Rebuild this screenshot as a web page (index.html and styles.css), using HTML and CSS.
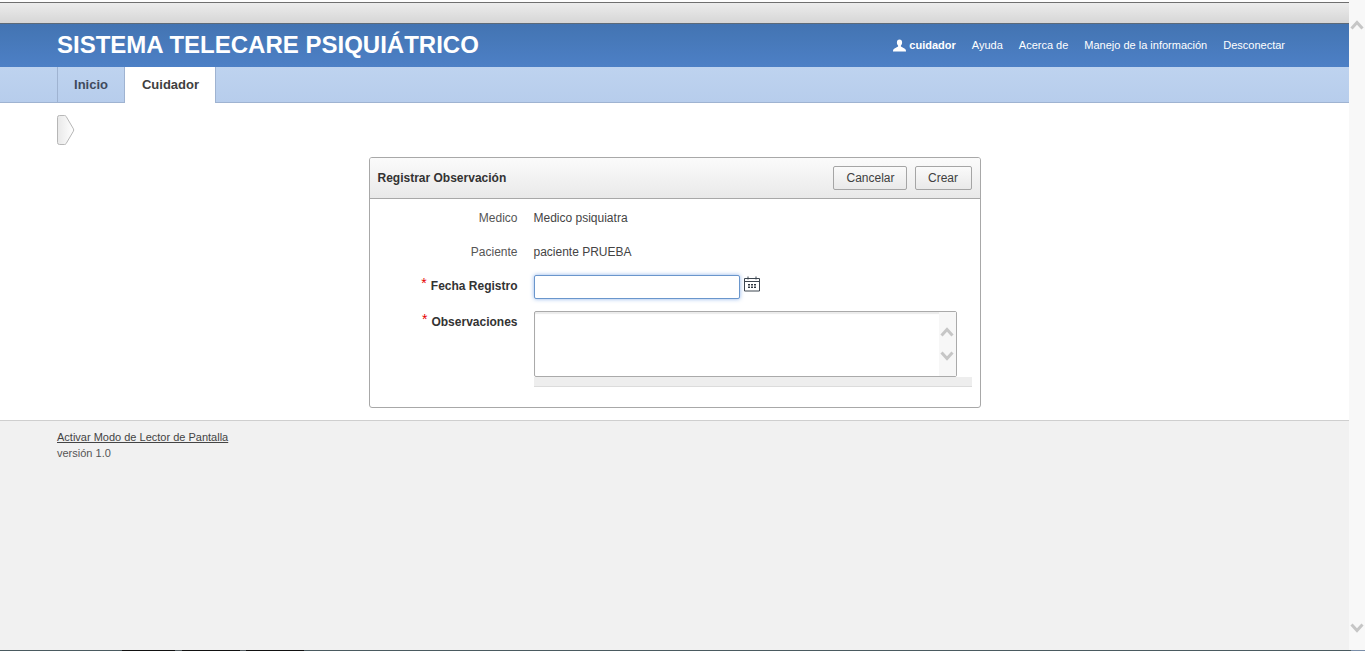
FILE: index.html
```html
<!DOCTYPE html>
<html lang="es">
<head>
<meta charset="utf-8">
<title>Sistema Telecare Psiquiátrico</title>
<link rel="stylesheet" href="styles.css">
</head>
<body>
<div class="top-row">
  <div class="page">
    <div class="top-edge"></div>
    <div class="browser-band"></div>
    <header class="header">
      <div class="brand">SISTEMA TELECARE PSIQUIÁTRICO</div>
      <nav class="user-nav">
        <span class="user"><svg class="user-icon" viewBox="0 0 14 13" aria-hidden="true"><path d="M7 0C5.2 0 4.2 1.3 4.2 3.2c0 1.4.5 2.7 1.3 3.4v1.1C4.600 8.600 1.600 9.400.6 10.600-.1 11.400 0 13 0 13h14s.1-1.600-.6-2.400C12.400 9.400 9.400 8.600 8.500 7.700V6.600c.8-.7 1.300-2 1.300-3.400C9.800 1.300 8.800 0 7 0z"/></svg>cuidador</span>
        <a>Ayuda</a>
        <a>Acerca de</a>
        <a>Manejo de la información</a>
        <a>Desconectar</a>
      </nav>
    </header>
    <nav class="tabs">
      <a class="tab">Inicio</a>
      <a class="tab tab-active">Cuidador</a>
    </nav>
    <main class="main">
      <div class="side-toggle">
        <svg class="toggle-icon" width="18" height="30" viewBox="0 0 18 31" preserveAspectRatio="none" aria-hidden="true">
          <defs><linearGradient id="tg" x1="0" x2="1" y1="0" y2="0"><stop offset="0" stop-color="#e8e8e8"/><stop offset="1" stop-color="#ffffff"/></linearGradient></defs>
          <path d="M2.500.5h5a2 2 0 0 1 1.600.9l7.300 12.900a2.500 2.500 0 0 1 0 2.400L9.100 29.600a2 2 0 0 1-1.600.9h-5a2 2 0 0 1-2-2v-26a2 2 0 0 1 2-2z" fill="url(#tg)" stroke="#b5b5b5"/>
        </svg>
      </div>
      <section class="card">
        <div class="card-head">
          <h2 class="card-title">Registrar Observación</h2>
          <div class="card-actions">
            <button class="btn btn-cancel" type="button">Cancelar</button>
            <button class="btn btn-create" type="button">Crear</button>
          </div>
        </div>
        <div class="form">
          <div class="row row-text">
            <div class="label">Medico</div>
            <div class="value">Medico psiquiatra</div>
          </div>
          <div class="row row-text">
            <div class="label">Paciente</div>
            <div class="value">paciente PRUEBA</div>
          </div>
          <div class="row row-date">
            <div class="label label-req label-date"><span class="req">*</span>Fecha Registro</div>
            <div class="field">
              <input class="date-input" type="text" aria-label="Fecha Registro">
              <svg class="cal-icon" width="16" height="16" viewBox="0 0 16 16" aria-hidden="true">
                <path d="M.5 2.500h15v12.500H.5z" fill="#fff" stroke="#3d4650"/>
                <path d="M1 5.500h14" stroke="#3d4650"/>
                <path d="M4 .5v3M12 .5v3" stroke="#3d4650"/>
                <path d="M4 8h2v1.500H4zM7 8h2v1.500H7zM10 8h2v1.500h-2zM4 10.500h2V12H4zM7 10.500h2V12H7zM10 10.500h2V12h-2z" fill="#2f3740"/>
              </svg>
            </div>
          </div>
          <div class="row row-area">
            <div class="label label-req label-area"><span class="req">*</span>Observaciones</div>
            <div class="area-wrap">
              <div class="area">
                <div class="area-input"></div>
                <div class="area-scroll">
                  <svg class="chev" width="14" height="10" viewBox="0 0 14 10" aria-hidden="true"><path d="M1.500 8.500 7 2.500l5.500 6" fill="none" stroke="#c6c6c6" stroke-width="3"/></svg>
                  <svg class="chev" width="14" height="10" viewBox="0 0 14 10" aria-hidden="true"><path d="M1.500 1.500 7 7.500l5.500-6" fill="none" stroke="#c6c6c6" stroke-width="3"/></svg>
                </div>
              </div>
              <div class="area-bar"></div>
            </div>
          </div>
        </div>
      </section>
    </main>
    <footer class="footer">
      <a class="footer-link">Activar Modo de Lector de Pantalla</a>
      <div class="version">versión 1.0</div>
    </footer>
  </div>
  <aside class="scrollbar">
    <svg class="chev" width="14" height="10" viewBox="0 0 14 10" aria-hidden="true"><path d="M1.500 8.500 7 2.500l5.500 6" fill="none" stroke="#c6c6c6" stroke-width="3"/></svg>
    <svg class="chev" width="14" height="10" viewBox="0 0 14 10" aria-hidden="true"><path d="M1.500 1.500 7 7.500l5.500-6" fill="none" stroke="#c6c6c6" stroke-width="3"/></svg>
  </aside>
</div>
<div class="bottom-edge"></div>
</body>
</html>
```
FILE: styles.css
```css
* { box-sizing: border-box; }
html, body { margin: 0; height: 651px; overflow: hidden; }
body {
  display: flex;
  flex-direction: column;
  font-family: "Liberation Sans", Arial, sans-serif;
  font-size: 12px;
  color: #404040;
  background: #fff;
}
.top-edge {
  height: 3px;
  background: #fdfdfd;
  border-bottom: 1px solid #6f6f6f;
  flex: none;
}
.top-row { flex: 1; display: flex; min-height: 0; }
.page { flex: 1; display: flex; flex-direction: column; min-width: 0; }
.browser-band {
  height: 21px;
  flex: none;
  background: linear-gradient(#ececec, #d6d6d6);
  border-bottom: 1px solid #5d6a78;
}
.header {
  height: 43px;
  flex: none;
  display: flex;
  align-items: center;
  justify-content: space-between;
  padding: 0 64px 1px 57px;
  background: linear-gradient(#4374b2, #4d80c6);
  color: #fff;
}
.brand { font-size: 24px; font-weight: 700; line-height: 28px; }
.user-nav { display: flex; align-items: center; gap: 16px; font-size: 11px; }
.user { display: flex; align-items: center; font-weight: 700; }
.user-icon { width: 13px; height: 13px; fill: #fff; margin-right: 3px; }
.tabs {
  height: 36px;
  flex: none;
  display: flex;
  padding-left: 57px;
  background: linear-gradient(#bed3ef, #b7cdec);
  border-bottom: 1px solid #9fb3d1;
}
.tab {
  display: flex;
  align-items: center;
  justify-content: center;
  width: 67px;
  height: 36px;
  padding-bottom: 2px;
  font-size: 13px;
  font-weight: 700;
  color: #414a5c;
  border-left: 1px solid #9fb3d1;
}
.tab-active {
  width: 92px;
  padding-left: 1px;
  background: #fff;
  color: #404040;
  border-right: 1px solid #9fb3d1;
}
.main { height: 317px; flex: none; background: #fff; overflow: hidden; }
.side-toggle { height: 54px; padding: 12px 0 0 57px; }
.toggle-icon { display: block; }
.card {
  width: 612px;
  height: 251px;
  margin: 0 auto;
  border: 1px solid #a8a8a8;
  border-radius: 3px;
  background: #fff;
}
.card-head {
  height: 41px;
  display: flex;
  align-items: center;
  justify-content: space-between;
  padding: 0 8px;
  background: linear-gradient(#fbfbfb, #e9e9e9);
  border-bottom: 1px solid #a8a8a8;
  border-radius: 2px 2px 0 0;
}
.card-title { margin: 0; font-size: 12px; font-weight: 700; color: #333; }
.card-actions { display: flex; gap: 8px; }
.btn {
  height: 24px;
  padding: 0;
  font-family: inherit;
  font-size: 12px;
  color: #404040;
  border: 1px solid #a5a5a5;
  border-radius: 2px;
  background: linear-gradient(#fafafa, #e9e9e9);
}
.btn-cancel { width: 74px; padding-left: 2px; }
.btn-create { width: 57px; }
.form { padding-top: 2px; }
.row { display: grid; grid-template-columns: 148px 1fr; column-gap: 16px; }
.row-text { height: 34px; align-items: center; }
.row-date { height: 35px; padding-top: 6px; }
.row-area { padding-top: 7px; }
.label { text-align: right; color: #555; line-height: 24px; }
.label-req { font-weight: 700; color: #333; }
.label-date { line-height: 22px; }
.label-area { line-height: 22px; }
.req {
  color: #e60000;
  font-size: 14px;
  font-weight: 400;
  margin-right: 4px;
  vertical-align: 2px;
  line-height: 1;
}
.value { color: #444; }
.field { display: flex; align-items: flex-start; gap: 4px; }
.date-input {
  width: 206px;
  height: 24px;
  padding: 0 4px;
  border: 1px solid #6a96cc;
  border-radius: 2px;
  background: #fff;
  box-shadow: 0 0 4px rgba(70, 130, 220, 0.6);
  outline: none;
}
.cal-icon { margin-top: 1px; }
.area-wrap { width: 438px; }
.area {
  width: 423px;
  height: 66px;
  display: flex;
  border: 1px solid #aaaaaa;
  border-radius: 2px;
  background: #fff;
  box-shadow: inset 0 2px 1px #ececec;
}
.area-input { flex: 1; }
.area-scroll {
  width: 17px;
  display: flex;
  flex-direction: column;
  align-items: center;
  justify-content: center;
  gap: 14px;
  background: #f7f7f7;
}
.chev { display: block; flex: none; }
.area-bar { height: 10px; background: #eeeeee; border-bottom: 1px solid #dcdcdc; }
.footer {
  flex: 1;
  padding: 8px 0 0 57px;
  background: #f1f1f1;
  border-top: 1px solid #cfcfcf;
  font-size: 11px;
  color: #555;
  line-height: 16px;
}
.footer-link { color: #444; text-decoration: underline; }
.version { color: #555; }
.scrollbar {
  width: 16px;
  flex: none;
  display: flex;
  flex-direction: column;
  justify-content: space-between;
  align-items: center;
  padding: 20px 0 17px;
  background: #f8f8f8;
}
.bottom-edge {
  height: 1px;
  flex: none;
  background: linear-gradient(to right, #4a5a60 0 122px, #111 122px 175px, #555e62 175px 182px, #111 182px 240px, #555e62 240px 246px, #111 246px 304px, #4a5a60 304px 1351px, #7a8ea8 1351px);
}
```
